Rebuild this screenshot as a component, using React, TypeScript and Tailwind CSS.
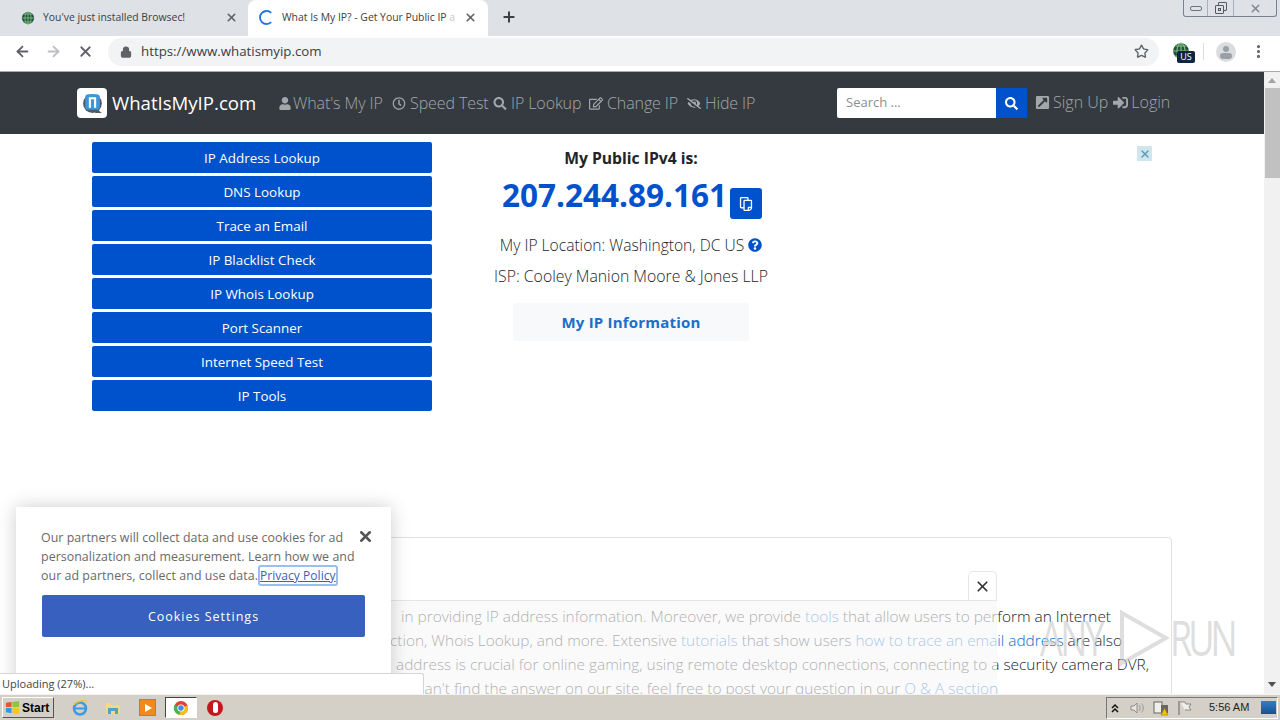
import { ArrowLeft, ArrowRight, Lock, MoreVertical, Plus, Star, X } from 'lucide-react';
import {
  FaEyeSlash,
  FaExternalLinkSquareAlt,
  FaQuestionCircle,
  FaRegClock,
  FaRegCopy,
  FaRegEdit,
  FaSearch,
  FaSignInAlt,
  FaUser,
} from 'react-icons/fa';

const sideLinks = [
  'IP Address Lookup',
  'DNS Lookup',
  'Trace an Email',
  'IP Blacklist Check',
  'IP Whois Lookup',
  'Port Scanner',
  'Internet Speed Test',
  'IP Tools',
];

const navLinks = [
  { label: "What's My IP", icon: FaUser, width: 'w-[114px]', iconBox: 'w-[15px]' },
  { label: 'Speed Test', icon: FaRegClock, width: 'w-[101px]', iconBox: 'w-[18px]' },
  { label: 'IP Lookup', icon: FaSearch, width: 'w-[96px]', iconBox: 'w-[18px]' },
  { label: 'Change IP', icon: FaRegEdit, width: 'w-[98px]', iconBox: 'w-[18px]' },
  { label: 'Hide IP', icon: FaEyeSlash, width: 'w-[150px]', iconBox: 'w-[18px]' },
];

function Globe({ className }: { className?: string }) {
  return (
    <svg viewBox="0 0 16 16" className={className}>
      <circle cx="8" cy="8" r="7" fill="#24523f" />
      <path d="M1 8h14M8 1v14M3 3.5h10M3 12.5h10" stroke="#7fc27f" strokeWidth="1" />
      <ellipse cx="8" cy="8" rx="3.5" ry="7" fill="none" stroke="#7fc27f" strokeWidth="1" />
    </svg>
  );
}

function TopChrome() {
  return (
    <>
      {/* Tab strip */}
      <div className="relative flex h-[36px] shrink-0 items-end bg-[#dee1e6]">
        <div className="flex h-[36px] w-[248px] items-center pb-[1px] pl-[21px] pr-[10px]">
          <Globe className="h-[14px] w-[14px] shrink-0" />
          <span className="ml-[8px] flex-1 truncate text-[10.4px] text-[#3c4043]">You've just installed Browsec!</span>
          <X className="h-[13px] w-[13px] text-[#5f6368]" strokeWidth={3} />
        </div>
        <div className="flex h-[36px] w-[240px] items-center rounded-t-[8px] bg-white pb-[1px] pl-[11px] pr-[11px]">
          <svg viewBox="0 0 16 16" className="h-[15px] w-[15px] shrink-0">
            <path d="M13 3a7 7 0 1 0 0 10" fill="none" stroke="#1a73e8" strokeWidth="2" />
          </svg>
          <span className="ml-[8px] w-[176px] whitespace-nowrap text-[10.4px] text-[#3c4043]">
            What Is My IP? - Get Your Public IP
            <span className="text-[#c5c7c9]"> a</span>
          </span>
          <X className="ml-auto h-[13px] w-[13px] text-[#5f6368]" strokeWidth={3} />
        </div>
        <div className="flex h-[36px] items-center pb-[2px] pl-[13px]">
          <Plus className="h-[16px] w-[16px] text-[#3c4043]" strokeWidth={3} />
        </div>
        {/* Window buttons */}
        <div className="absolute right-[3px] top-0 flex h-[17px] w-[94px] items-center rounded-b-[3px] border border-t-0 border-[#7b828c] bg-[#dee1e6]">
          <div className="flex h-full w-[24px] items-center justify-center border-r border-[#aab0b8]">
            <div className="h-[5px] w-[12px] rounded-[2px] border border-[#6f7379]" />
          </div>
          <div className="flex h-full w-[26px] items-center justify-center border-r border-[#aab0b8]">
            <div className="relative h-[12px] w-[12px]">
              <div className="absolute right-0 top-0 h-[9px] w-[9px] rounded-[1px] border border-[#55595f]" />
              <div className="absolute bottom-0 left-0 flex h-[9px] w-[9px] items-center justify-center rounded-[1px] border border-[#55595f] bg-[#dee1e6]">
                <div className="h-[3px] w-[3px] border border-[#55595f]" />
              </div>
            </div>
          </div>
          <div className="flex flex-1 items-center justify-center">
            <X className="h-[13px] w-[13px] text-[#80858c]" strokeWidth={2.5} />
          </div>
        </div>
      </div>

      {/* Toolbar */}
      <div className="flex h-[36px] shrink-0 items-center border-b border-[#a9abae] bg-white pb-[4px]">
        <ArrowLeft className="ml-[14px] h-[17px] w-[17px] text-[#5f6368]" strokeWidth={2.5} />
        <ArrowRight className="ml-[14px] h-[17px] w-[17px] text-[#bcbfc3]" strokeWidth={2.5} />
        <X className="ml-[15px] h-[17px] w-[17px] text-[#5f6368]" strokeWidth={2.5} />
        <div className="ml-[14px] flex h-[28px] w-[1051px] items-center rounded-full bg-[#f1f3f4] pl-[12px] pr-[10px]">
          <Lock className="h-[12px] w-[12px] fill-[#5f6368] text-[#5f6368]" strokeWidth={2.5} />
          <span className="ml-[9px] pt-[1px] text-[13.3px] text-[#3c4043]">https://www.whatismyip.com</span>
          <Star className="ml-auto h-[15px] w-[15px] text-[#5f6368]" strokeWidth={2.2} />
        </div>
        <div className="relative ml-[13px] h-[20px] w-[20px]">
          <Globe className="h-[18px] w-[18px]" />
          <span className="absolute left-[5px] top-[9px] flex h-[12px] w-[18px] items-center justify-center rounded-[2px] bg-[#10233f] text-[9px] leading-none text-white">
            US
          </span>
        </div>
        <div className="ml-[11px] h-[17px] w-px bg-[#dadce0]" />
        <div className="relative ml-[12px] h-[20px] w-[20px] overflow-hidden rounded-full bg-[#dadce0]">
          <div className="mx-auto mt-[4px] h-[6px] w-[6px] rounded-full bg-[#9aa0a6]" />
          <div className="mx-auto mt-[1px] h-[6px] w-[12px] rounded-full bg-[#9aa0a6]" />
        </div>
        <MoreVertical className="ml-[14px] h-[17px] w-[17px] text-[#5f6368]" strokeWidth={2.5} />
      </div>
    </>
  );
}

function NavBar() {
  return (
    <div className="flex h-[62px] shrink-0 items-center bg-[#343a40] pl-[77px] text-[16px] font-light text-[#a4a7aa]">
      <div className="flex h-[30px] w-[30px] items-center justify-center rounded-[4px] bg-white">
        <svg viewBox="0 0 24 24" className="h-[25px] w-[25px]">
          <circle cx="12" cy="12" r="9" fill="#55595f" />
          <path d="M17 18l4 3h-7z" fill="#55595f" />
          <rect x="5" y="3" width="14" height="15" rx="3" fill="#3b98d8" />
          <path d="M9.5 16V7h5v9" fill="none" stroke="#fff" strokeWidth="2" />
        </svg>
      </div>
      <span className="ml-[5px] w-[166px] text-[18.6px] font-normal text-white">WhatIsMyIP.com</span>
      {navLinks.map((item) => (
        <span key={item.label} className={`flex shrink-0 items-center whitespace-nowrap tracking-[-0.1px] ${item.width}`}>
          <span className={`shrink-0 ${item.iconBox}`}>
            <item.icon className="h-[13px] w-[14px]" />
          </span>
          {item.label}
        </span>
      ))}
      <div className="flex h-[30px] w-[190px] shrink-0">
        <div className="flex w-[159px] items-center rounded-l-[2px] bg-white pl-[9px] text-[13px] font-normal text-[#8a8f94]">Search ...</div>
        <div className="flex w-[31px] items-center justify-center bg-[#0052cc]">
          <FaSearch className="h-[13px] w-[13px] text-white" />
        </div>
      </div>
      <span className="ml-[8px] flex -translate-y-px items-center gap-[3px] whitespace-nowrap">
        <FaExternalLinkSquareAlt className="h-[15px] w-[15px]" />
        Sign Up
      </span>
      <span className="ml-[5px] flex -translate-y-px items-center gap-[3px] whitespace-nowrap">
        <FaSignInAlt className="h-[15px] w-[15px]" />
        Login
      </span>
    </div>
  );
}

function IpPanel() {
  return (
    <div className="flex w-[398px] flex-col items-center pt-[6px] text-[#212529]">
      <div className="text-[15.7px] font-bold leading-[20px]">My Public IPv4 is:</div>
      <div className="mt-[7px] flex h-[44px] items-start pl-[2px]">
        <span className="text-[31.5px] font-bold leading-[40px] text-[#0052cc]">207.244.89.161</span>
        <span className="ml-[3px] mt-[13px] flex h-[31px] w-[32px] items-center justify-center rounded-[3px] bg-[#0052cc]">
          <FaRegCopy className="h-[14px] w-[14px] -scale-y-100 text-white" />
        </span>
      </div>
      <div className="mt-[15px] flex items-center gap-[4px] text-[15.6px] font-light leading-[22px]">
        My IP Location: Washington, DC US
        <FaQuestionCircle className="h-[14px] w-[14px] text-[#0052cc]" />
      </div>
      <div className="mt-[9px] text-[15.8px] font-light leading-[22px]">ISP: Cooley Manion Moore &amp; Jones LLP</div>
      <div className="mt-[16px] flex h-[38px] w-[236px] items-center justify-center rounded-[3px] bg-[#f8f9fa] text-[15px] font-bold tracking-[0.2px] text-[#1a6fc9]">
        My IP Information
      </div>
    </div>
  );
}

function ArticleCard() {
  const link = 'text-[#0b6bcb]';
  return (
    <div className="ml-[92px] mt-[126px] h-[300px] w-[1080px] rounded-[4px] border border-[#dfe2e5] pr-[60px] pt-[67px] text-[15.4px] font-light leading-[24px] text-[#212529]">
      <div className="flex justify-end whitespace-nowrap">
        <span>
          in providing IP address information. Moreover, we provide <span className={link}>tools</span> that allow users to perform an Internet
        </span>
      </div>
      <div className="-mr-[11px] flex justify-end whitespace-nowrap">
        <span>
          ction, Whois Lookup, and more. Extensive <span className={link}>tutorials</span> that show users <span className={link}>how to trace an email address</span> are also
        </span>
      </div>
      <div className="-mr-[38px] flex justify-end whitespace-nowrap">
        <span>address is crucial for online gaming, using remote desktop connections, connecting to a security camera DVR,</span>
      </div>
      <div className="mr-[113px] flex justify-end whitespace-nowrap">
        <span>
          an't find the answer on our site, feel free to post your question in our <span className={link}>Q &amp; A section</span>
        </span>
      </div>
    </div>
  );
}

function Page() {
  return (
    <div className="relative flex min-h-0 flex-1 overflow-hidden">
      <div className="h-full w-[1264px] shrink-0 overflow-hidden bg-white">
        <NavBar />
        <div className="flex pt-[8px]">
          <div className="ml-[92px] flex w-[340px] flex-col gap-[3px]">
            {sideLinks.map((label) => (
              <div key={label} className="flex h-[31px] items-center justify-center rounded-[2px] bg-[#0052cc] pt-[2px] text-[13.4px] text-white">
                {label}
              </div>
            ))}
          </div>
          <IpPanel />
          <div className="ml-[307px] mt-[4px] flex h-[15px] w-[15px] items-center justify-center bg-[#cfe6ee]">
            <X className="h-[12px] w-[12px] text-[#5a9db8]" strokeWidth={3} />
          </div>
        </div>
        <ArticleCard />
      </div>

      {/* Scrollbar */}
      <div className="flex w-[16px] flex-col items-center bg-[#f1f1f1]">
        <div className="mt-[6px] h-0 w-0 border-x-[4px] border-b-[5px] border-x-transparent border-b-[#a3a3a3]" />
        <div className="mt-[5px] h-[90px] w-[15px] bg-[#c1c1c1]" />
        <div className="mb-[7px] mt-auto h-0 w-0 border-x-[4px] border-t-[5px] border-x-transparent border-t-[#505050]" />
      </div>

      {/* Ad overlay */}
      <div className="absolute left-[391px] top-[528px] h-[94px] w-[606px] border-t border-[#e6e6e6] bg-[#f7f7f7]/65" />
      <div className="absolute left-[968px] top-[499px] flex h-[29px] w-[29px] items-center justify-center rounded-t-[5px] border-x border-t border-[#e6e6e6] bg-white">
        <X className="h-[17px] w-[17px] text-[#333]" strokeWidth={2.4} />
      </div>

      {/* Watermark */}
      <div className="absolute left-[1040px] top-[538px] flex h-[56px] items-center text-[#c8c8c8]/60">
        <span className="w-[78px] scale-y-[1.35] text-[36px] leading-[56px] tracking-[-2.5px]">ANY</span>
        <svg viewBox="0 0 52 56" className="h-[56px] w-[52px]">
          <path d="M4 3l44 25L4 53z" fill="none" stroke="#c8c8c8" strokeOpacity="0.6" strokeWidth="4" />
        </svg>
        <span className="w-[62px] scale-y-[1.35] text-[36px] leading-[56px] tracking-[-4px]">RUN</span>
      </div>

      {/* Cookie banner */}
      <div className="absolute left-[16px] top-[435px] h-[200px] w-[375px] bg-white px-[25px] pt-[21px] shadow-[0_0_18px_rgba(0,0,0,0.2)]">
        <p className="w-[320px] text-[12.4px] leading-[19px] tracking-[0.05px] text-[#696969]">
          Our partners will collect data and use cookies for ad personalization and measurement. Learn how we and our ad partners, collect and use
          data.
          <span className="ml-[2px] whitespace-nowrap rounded-[1px] text-[12px] text-[#3860be] underline outline-2 outline-[#9dbcf0]">Privacy Policy</span>
        </p>
        <X className="absolute left-[341px] top-[21px] h-[17px] w-[17px] text-[#555]" strokeWidth={3.5} />
        <div className="ml-px mt-[10px] flex h-[42px] w-[323px] items-center justify-center rounded-[2px] bg-[#3860be] pt-[2px] text-[12.5px] tracking-[1px] text-white">
          Cookies Settings
        </div>
      </div>

      {/* Status bubble */}
      <div className="absolute bottom-0 left-0 flex h-[21px] w-[424px] items-center rounded-tr-[3px] border-r border-t border-[#d5d5d5] bg-white pl-[2px] text-[11px] text-[#444]">
        Uploading (27%)...
      </div>
    </div>
  );
}

function Taskbar() {
  return (
    <div className="flex h-[26px] shrink-0 items-center border-t border-[#f4f2ee] bg-[#d4d0c8] [font-family:'Liberation_Sans',sans-serif]">
      <div className="ml-[2px] flex h-[21px] w-[52px] items-center gap-[2px] border border-b-[#555] border-l-white border-r-[#555] border-t-white pl-[2px] text-[12px] font-bold text-black">
        <svg viewBox="0 0 16 16" className="h-[15px] w-[15px]">
          <path d="M1 3l6-1v5.5H1z" fill="#e8552d" />
          <path d="M8 2l7-1v6.5H8z" fill="#8cc63f" />
          <path d="M1 8.5h6V14l-6-1z" fill="#2e9be6" />
          <path d="M8 8.5h7V15l-7-1z" fill="#f8c51c" />
        </svg>
        Start
      </div>
      <svg viewBox="0 0 16 16" className="ml-[18px] h-[16px] w-[16px]">
        <ellipse cx="8" cy="8.5" rx="6" ry="6" fill="none" stroke="#3b9ae0" strokeWidth="2.5" />
        <path d="M2 8.5h12" stroke="#3b9ae0" strokeWidth="2" />
        <path d="M2 5C5 1 12 0 15 1" fill="none" stroke="#f2c12e" strokeWidth="1.2" />
      </svg>
      <svg viewBox="0 0 16 16" className="ml-[17px] h-[16px] w-[16px]">
        <path d="M1 3h5l1 2h8v9H1z" fill="#f0d98a" />
        <path d="M3 8h10v6h-3v-3H6v3H3z" fill="#4fa3c7" />
      </svg>
      <div className="ml-[18px] flex h-[17px] w-[17px] items-center justify-center border border-[#5d93bd] bg-[#f08a1d]">
        <div className="ml-px h-0 w-0 border-y-[4px] border-l-[7px] border-y-transparent border-l-white" />
      </div>
      <div className="ml-[9px] flex h-[21px] w-[32px] items-center justify-center border border-b-white border-l-[#444] border-r-white border-t-[#444] bg-white">
        <svg viewBox="0 0 16 16" className="h-[16px] w-[16px]">
          <circle cx="8" cy="8" r="7" fill="#db4437" />
          <path d="M14.5 5.500A7 7 0 0 1 6 14.700L8 8z" fill="#f4c20d" />
          <path d="M6 14.700A7 7 0 0 1 1.500 5L8 8z" fill="#3cba54" />
          <circle cx="8" cy="8" r="3.600" fill="#fff" />
          <circle cx="8" cy="8" r="2.700" fill="#4885ed" />
        </svg>
      </div>
      <div className="ml-[10px] flex h-[16px] w-[16px] items-center justify-center rounded-full bg-[#c4161c]">
        <div className="h-[11px] w-[5px] rounded-full bg-white" />
      </div>

      {/* Tray */}
      <div className="ml-auto mr-[2px] flex h-[22px] w-[172px] items-center border border-b-white border-l-[#777] border-r-white border-t-[#777] pl-[3px]">
        <svg viewBox="0 0 10 10" className="h-[10px] w-[10px]">
          <path d="M2 5l3-3 3 3M2 9l3-3 3 3" fill="none" stroke="#111" strokeWidth="1.500" />
        </svg>
        <svg viewBox="0 0 16 16" className="ml-[9px] h-[16px] w-[16px]">
          <path d="M2 6h3l3-3v10l-3-3H2z" fill="#e8e6e0" stroke="#8d8d8d" />
          <path d="M10 5c1.500 2 1.500 4 0 6M12.500 3.500c2.500 3 2.500 6 0 9" fill="none" stroke="#9a9a9a" />
        </svg>
        <svg viewBox="0 0 16 16" className="ml-[8px] h-[16px] w-[16px]">
          <rect x="1" y="2" width="8" height="11" fill="#efefe8" stroke="#666" />
          <rect x="8" y="5" width="7" height="8" fill="#666" />
          <path d="M8 15l3.500-7 3.500 7z" fill="#f6c400" stroke="#8a6d00" strokeWidth="0.500" />
        </svg>
        <svg viewBox="0 0 16 16" className="ml-[8px] h-[16px] w-[16px]">
          <path d="M2 1v14" stroke="#777" strokeWidth="1.200" />
          <path d="M3 2h5l1 2h5l-2 3 2 3H8" fill="#efefe8" stroke="#888" />
        </svg>
        <span className="ml-[16px] whitespace-nowrap text-[11px] text-[#222]">5:56 AM</span>
        <div className="ml-[12px] h-[13px] w-[15px] shrink-0 bg-gradient-to-b from-[#2f80c9] to-[#1b4f90]" />
      </div>
    </div>
  );
}

export default function App() {
  return (
    <div className="flex h-[720px] w-[1280px] flex-col overflow-hidden bg-white [font-family:'Open_Sans',sans-serif]">
      <TopChrome />
      <Page />
      <Taskbar />
    </div>
  );
}
